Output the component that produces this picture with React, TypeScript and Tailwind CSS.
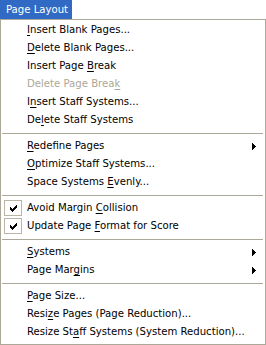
import type { ReactNode } from "react";

type Item =
  | { sep: true }
  | {
      sep?: false;
      pre: string;
      key: string;
      post: string;
      disabled?: boolean;
      checked?: boolean;
      sub?: boolean;
    };

const items: Item[] = [
  { pre: "", key: "I", post: "nsert Blank Pages..." },
  { pre: "", key: "D", post: "elete Blank Pages..." },
  { pre: "Insert Page ", key: "B", post: "reak" },
  { pre: "Delete Page Brea", key: "k", post: "", disabled: true },
  { pre: "I", key: "n", post: "sert Staff Systems..." },
  { pre: "De", key: "l", post: "ete Staff Systems" },
  { sep: true },
  { pre: "", key: "R", post: "edefine Pages", sub: true },
  { pre: "", key: "O", post: "ptimize Staff Systems..." },
  { pre: "Space Systems ", key: "E", post: "venly..." },
  { sep: true },
  { pre: "Avoid Margin ", key: "C", post: "ollision", checked: true },
  { pre: "Update Page ", key: "F", post: "ormat for Score", checked: true },
  { sep: true },
  { pre: "", key: "S", post: "ystems", sub: true },
  { pre: "Page Mar", key: "g", post: "ins", sub: true },
  { sep: true },
  { pre: "", key: "P", post: "age Size..." },
  { pre: "Resi", key: "z", post: "e Pages (Page Reduction)..." },
  { pre: "Resize St", key: "a", post: "ff Systems (System Reduction)..." },
];

function Check() {
  return (
    <svg width="7" height="7" viewBox="0 0 7 7" shapeRendering="crispEdges">
      <rect x="6" y="0" width="1" height="3" fill="#000" />
      <rect x="5" y="1" width="1" height="3" fill="#000" />
      <rect x="4" y="2" width="1" height="3" fill="#000" />
      <rect x="3" y="3" width="1" height="3" fill="#000" />
      <rect x="2" y="4" width="1" height="3" fill="#000" />
      <rect x="1" y="3" width="1" height="3" fill="#000" />
      <rect x="0" y="2" width="1" height="3" fill="#000" />
    </svg>
  );
}

function Arrow() {
  return (
    <svg width="4" height="7" viewBox="0 0 4 7" shapeRendering="crispEdges">
      <path d="M0 0 L4 3.5 L0 7 Z" fill="#000" />
    </svg>
  );
}

function Row({ children, checked, sub, disabled }: { children: ReactNode; checked?: boolean; sub?: boolean; disabled?: boolean }) {
  return (
    <div className="relative flex h-[18px] items-center">
      <div className="flex w-[26px] shrink-0 items-center justify-center self-stretch py-[1px] pl-[3px] pr-[5px]">
        {checked && (
          <div className="flex h-full w-full items-center justify-center border border-[#b9b6a8]">
            <Check />
          </div>
        )}
      </div>
      <span className={disabled ? "flex-1 text-[#aca899]" : "flex-1 text-black"}>{children}</span>
      <div className="flex w-[13px] shrink-0 items-center">{sub && <Arrow />}</div>
    </div>
  );
}

export default function App() {
  return (
    <div
      className="h-[345px] w-[266px] bg-white text-[11.25px] leading-none antialiased"
      style={{ fontFamily: '"DejaVu Sans Condensed", Tahoma, "Liberation Sans", sans-serif' }}
    >
      <div className="flex h-[19px] w-[72px] items-center bg-[#316ac5] pl-[6px] text-white">Page Layout</div>
      <div className="h-[326px] border border-[#aca899] bg-white pt-[1px] pb-[2px]">
        {items.map((it, i) =>
          it.sep ? (
            <div key={i} className="h-[8px] pt-[4px] pl-[1px] pr-[2px]">
              <div className="h-px bg-[#aca899]" />
            </div>
          ) : (
            <Row key={i} checked={it.checked} sub={it.sub} disabled={it.disabled}>
              {it.pre}
              <span className="underline underline-offset-[2px]">{it.key}</span>
              {it.post}
            </Row>
          )
        )}
      </div>
    </div>
  );
}
